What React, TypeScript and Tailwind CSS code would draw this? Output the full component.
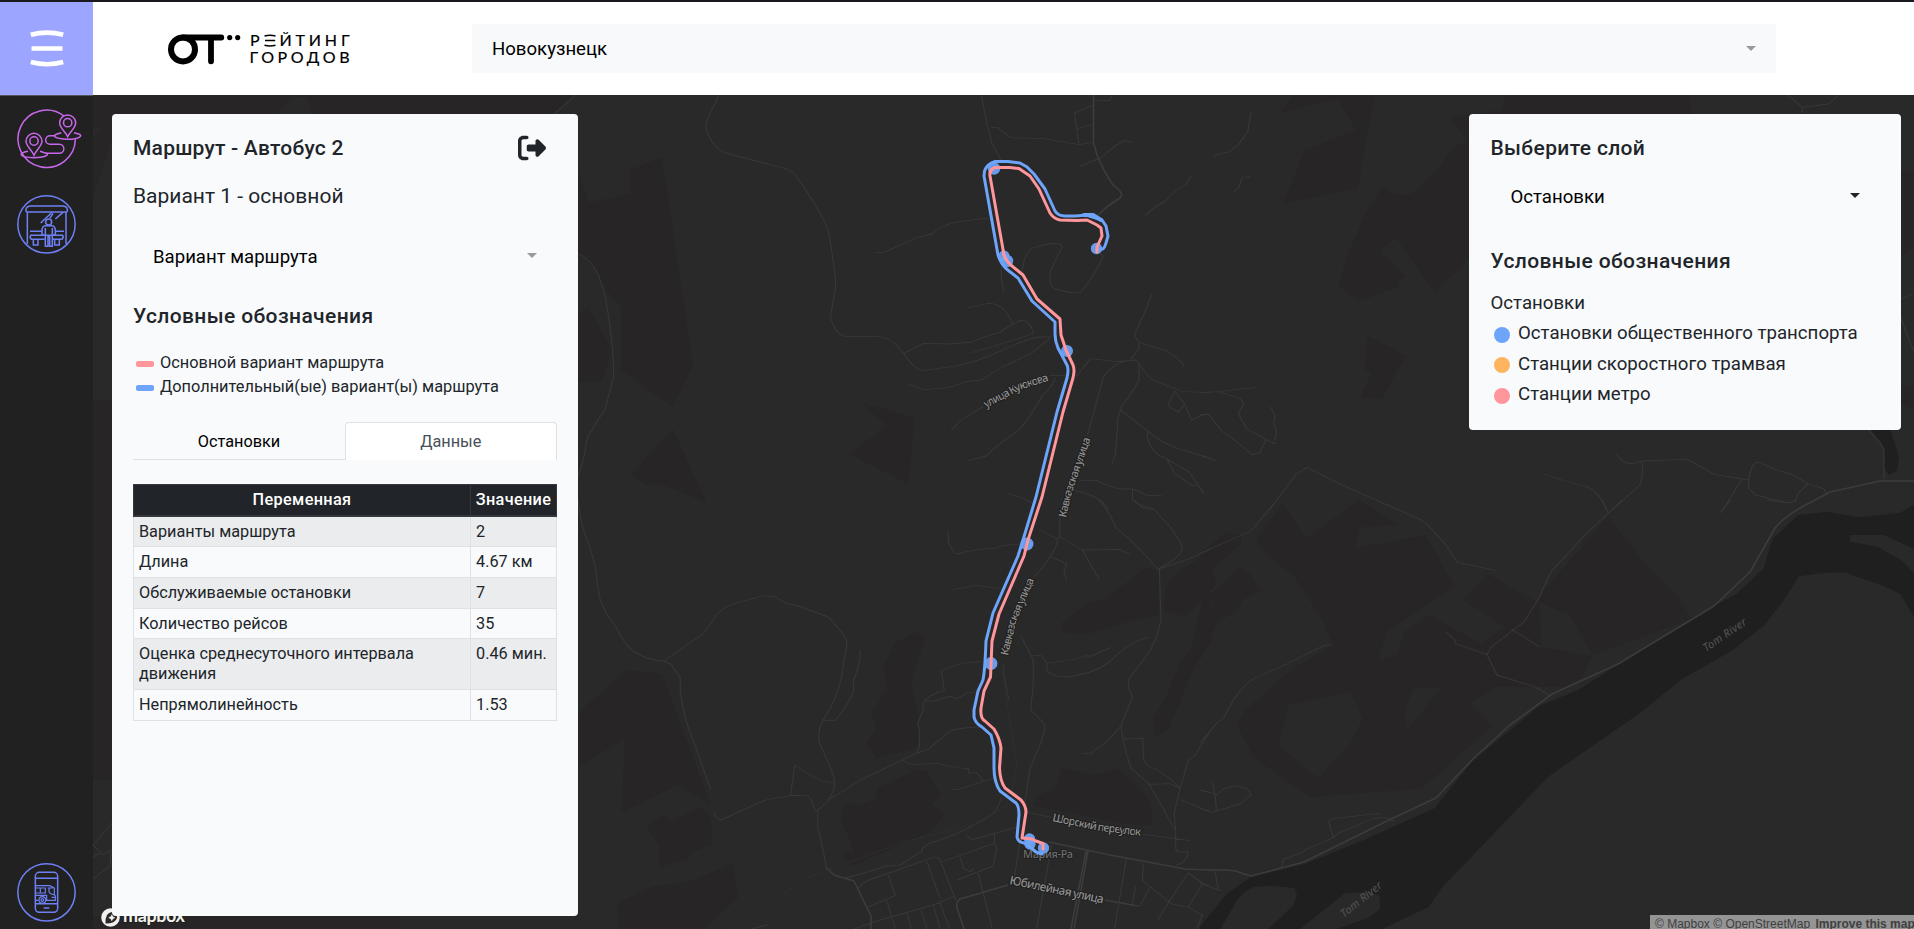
import React from "react";
import { FaRightFromBracket } from "react-icons/fa6";

const BLUE = "#6ea5fa";
const RED = "#ff969c";

const rows: [string, string][] = [
  ["Варианты маршрута", "2"],
  ["Длина", "4.67 км"],
  ["Обслуживаемые остановки", "7"],
  ["Количество рейсов", "35"],
  ["Оценка среднесуточного интервала движения", "0.46 мин."],
  ["Непрямолинейность", "1.53"],
];

function Caret({ className }: { className: string }) {
  return (
    <svg width="10" height="5" viewBox="0 0 10 5" className={className}>
      <path d="M0 0h10L5 5z" fill="currentColor" />
    </svg>
  );
}

function Logo() {
  return (
    <svg width="190" height="40" viewBox="165 30 190 40" fill="none" stroke="#000">
      <circle cx="183" cy="50.4" r="12" strokeWidth="6" />
      <path d="M183 38.5H221.3M211 39V62.3" strokeWidth="5.8" strokeLinecap="round" />
      <g fill="#000" stroke="none">
        <circle cx="229.7" cy="38.6" r="2.6" />
        <circle cx="237.7" cy="38.6" r="2.6" />
        <g fontFamily="Lato, Inter, sans-serif" fontSize="16" fontWeight="400" stroke="#000" strokeWidth=".2">
          <text x="250" y="47">Р</text>
          <text x="279.500" y="47" textLength="70">ЙТИНГ</text>
          <text x="249.500" y="64.300" textLength="100">ГОРОДОВ</text>
        </g>
      </g>
      <path d="M264.500 37q5.500-1.600 11 0M265 41.600h10.200M264.500 46.200q5.500 1.600 11 0" strokeWidth="1.500" />
    </svg>
  );
}

function RouteIcon() {
  return (
    <svg width="93" height="86" viewBox="0 285 279 258" fill="none" stroke="#c767ea" strokeWidth="4.500">
      <path d="M192 348A86 86 0 1 0 226 418" />
      <path d="M102 466C96 450 78 438 78 424a24 24 0 0 1 48 0C126 438 108 450 102 466z" />
      <circle cx="102" cy="423" r="12.500" />
      <path d="M203 410C197 395 179 384 179 369a24 24 0 0 1 48 0C227 384 209 395 203 410z" />
      <circle cx="203" cy="368" r="12.500" />
      <path d="M84 454C50 460 60 472 100 473C135 473 150 464 138 460L120 454" />
      <path d="M184 398C150 406 160 416 203 418C240 418 250 406 236 402L222 398" />
      <path d="M166 407H150a13 13 0 0 0 0 26H178a13 13 0 0 1 0 27H138" />
    </svg>
  );
}

function StopIcon() {
  return (
    <svg width="93" height="86" viewBox="0 543 279 258" fill="none" stroke="#6e80f5" strokeWidth="4.500">
      <circle cx="139.500" cy="673" r="86" />
      <path d="M78 634V628Q80 618 92 618H188Q200 618 202 628V634Q202 636 198 636H82Q78 636 78 634z" />
      <path d="M82 636V732M198 636V732M90 694H126M168 694H192M122 669L154 639M150 654L159 640M166 657L189 637" />
      <circle cx="146" cy="666" r="9" />
      <path d="M136 677H156Q166 678 166 692V706H126V692Q126 678 136 677z" />
      <path d="M136 684V739H144V710H149V739H157V684" />
      <path d="M134 706H92Q88 712 94 718H134M158 706H188Q192 712 186 718H158M100 718V735H114V718M164 718V735H178V718" />
    </svg>
  );
}

function PhoneIcon() {
  return (
    <svg width="93" height="72" viewBox="0 111 279 216" fill="none" stroke="#6e80f5" strokeWidth="4.500">
      <circle cx="139.500" cy="217" r="86" />
      <rect x="106" y="157" width="67" height="120" rx="12" />
      <path d="M106 175H173M106 251H173M131 264H148" />
      <g strokeWidth="3.500">
        <path d="M108 197H150L163 204V224L166 228V241H138M108 204H136V219H108M121 204V219M108 226H140V240M148 204Q142 222 162 224M143 204H160M155 232H164M108 241H116" />
        <circle cx="127" cy="240" r="10" />
        <circle cx="127" cy="240" r="4" />
      </g>
    </svg>
  );
}

function StreetLabel({ id, d, length, size, children, fill = "#8f8f8f", italic = false }: { id: string; d: string; length: number; size: number; children: string; fill?: string; italic?: boolean }) {
  return (
    <>
      <path id={id} d={d} fill="none" stroke="none" />
      <text fontSize={size} fill={fill} fontWeight={italic ? 400 : 500} stroke="#202020" strokeWidth={italic ? 0 : 2} paintOrder="stroke" fontStyle={italic ? "italic" : "normal"}>
        <textPath href={`#${id}`} textLength={length}>{children}</textPath>
      </text>
    </>
  );
}

function MapCanvas() {
  return (
    <svg className="absolute inset-0 h-full w-full" viewBox="93 95 1821 834" fill="none" preserveAspectRatio="none">
      <rect x="93" y="95" width="1821" height="834" fill="#292929" />

      {/* Land cover */}
      <g fill="#272526">
        <path d="M93 95H571L552 114H112V138L93 197z" />
        <path d="M93 400H112V780H93zM93 916H400V929H93z" />
        <g transform="translate(570 90) scale(.40816 .33333)">
          <path d="M20 240L45 338L150 312L147 240L225 202L301 825L252 950L125 840V650L82 590L68 545L20 490zM20 668L45 655L102 778L78 873L20 877zM252 1018L334 1238L222 1180L190 1185L148 1156zM713 936L843 984L829 1180L684 1092L777 1009z" />
        </g>
        <g transform="translate(570 500) scale(.40816 .33333)">
          <path d="M20 640L138 511L225 522L343 910L262 855L127 936L134 716L20 800zM188 978L228 947L250 963L323 920L345 955L349 1034L297 1055L290 1076L220 1100V1038zM115 1212L205 1159L290 1147L397 1091L412 1192L330 1287H120zM795 430L846 397L871 409L835 545L853 650V738L752 774L728 728L751 682L739 635L779 568L769 500zM674 908L712 916L749 896L755 864L850 810L875 816L907 884L887 914L917 944L887 992L690 1098L667 1068L675 1052L701 1066L664 960zM1207 365L1267 311L1310 300L1409 204L1442 215V347L1380 360L1265 403L1208 397zM1206 804L1280 826L1345 807L1376 844L1410 885L1427 940L1425 975H1390L1310 960L1138 917L1142 890L1190 864zM1568 155L1480 225L1460 260L1453 330L1505 348L1550 300L1520 450L1495 490L1465 580L1430 655L1432 710L1465 690L1530 500L1568 430z" />
        </g>
        <g transform="translate(1200 90) scale(.45536 .33333)">
          <path d="M203 15H383L346 295L183 341L230 182L343 120L302 25L177 70zM673 15H1075L1080 75H600V495L515 606L430 442L395 482L451 560L433 572L440 588L350 633L304 588L326 487L372 350L402 290Q430 330 466 310L530 225L551 180L586 150L550 82L660 61zM1539 245H1568V470L1539 500zM1539 885L1568 890V960L1539 940zM368 738L451 797L399 927L354 919L377 847L362 838z" />
        </g>
        <g transform="translate(1200 500) scale(.45536 .33333)">
          <path d="M182 10L233 117L349 0L435 73L351 82L340 145L495 106L558 258L411 394L389 483L434 463L450 394L504 346L617 432L670 380L577 298L631 222L741 308L751 278L897 50L970 180L1055 300L1078 356L862 466L840 530L800 560H643V570L592 607L642 677L487 865L242 891L119 773L82 675L100 630L200 510L293 435L265 350L208 231L137 150L123 118zM0 160L60 95L90 106V130L25 210L36 252L0 300zM0 350L33 317L18 290L88 202L108 220L133 272L92 299L84 330L38 365L0 480z" />
        </g>
      </g>
      <g fill="#292929">
        <path d="M276 114L293 97H307L312 114zM93 126L101 130L93 136z" />
        <g transform="translate(1200 500) scale(.45536 .33333)">
          <path d="M192 616L330 573L357 658L330 730L260 835L171 737L189 650zM470 565L533 560L453 693L448 630zM745 305L812 345L862 468L750 442z" />
        </g>
      </g>

      {/* Rivers */}
      <g transform="translate(1200 500) scale(.45536 .33333)" fill="#1f1f1f">
        <path d="M1568 15L1538 38L1450 52L1375 35L1313 46L1257 118L1238 205L1180 280L1050 380L830 570L745 618L598 784L515 925L360 1020L230 1092L112 1131L60 1180L0 1280V1287H400L503 1220L530 1165L765 830L970 635L1055 540L1170 450L1240 375L1285 295L1315 229L1370 219L1415 217L1500 257L1538 282L1568 350V222L1542 182L1488 140L1427 125V105H1502L1568 147z" />
        <path d="M45 1287L78 1208Q95 1170 120 1160L155 1157L207 1164L213 1184L205 1216L150 1287zM220 1287L318 1180L370 1175L395 1187V1228L370 1253L300 1287z" fill="#292929" />
      </g>
      <path d="M1870 428H1890L1899 457L1897 471L1889 475L1884 468V448z" fill="#1f1f1f" />

      {/* Minor streets */}
      <g stroke="#383838" strokeWidth="1" strokeLinejoin="round">
        <path d="M554 114L571 100L575 95M93 845L112 823M93 845L103 855L111 850L110 866L93 879M100 853L93 857" />
        <g transform="translate(570 90) scale(.40816 .33333)">
          <g strokeWidth="2.600">
            <path d="M365 15L343 70Q330 105 334 115Q348 180 390 192L520 233Q545 240 555 260Q625 380 634 430Q650 540 651 590L638 680Q650 738 680 740H750Q788 740 817 790Q845 840 862 842L940 829Q1000 815 1050 786Q1120 745 1150 741H1180" />
            <path d="M20 490Q50 510 68 550Q82 590 88 630Q107 760 107 860Q88 950 85 960Q60 1005 54 1020Q42 1035 39 1065Q35 1110 20 1160" />
            <path d="M746 487H770L850 443L887 432Q915 400 960 394L1020 384L1028 390M1008 15Q1020 100 1034 160L1057 212M1030 113H1048L1080 143L1160 146L1247 164L1280 157M1236 69L1247 160M1236 69L1280 46M1243 116L1280 104M1282 31H1322L1329 15M1250 228L1300 204Q1330 170 1359 151L1376 158M1410 377Q1430 350 1456 336Q1480 300 1510 282L1523 256M1107 545Q1115 475 1140 472Q1200 450 1206 470L1178 540Q1170 585 1190 597Q1230 612 1250 607Q1280 570 1306 500L1298 488M1057 530V565L1063 605M975 653L1025 640Q1065 640 1085 703M817 790L867 760L935 762L985 756Q1010 740 1055 727Q1080 700 1110 690Q1130 700 1136 730Q1090 750 985 788M830 883L867 899L927 893L970 875L1008 870Q1030 850 1060 831L1130 790L1176 745M1012 950L955 993L934 1022M1176 857H1220M1190 862Q1180 895 1160 912Q1125 985 1100 1020Q1060 1050 1020 1098L975 1112M1240 860L1275 806L1340 815L1385 810M1425 613Q1410 665 1383 735L1394 757V778L1373 808M1394 757L1455 780Q1490 800 1505 830M1268 1035L1307 860Q1330 820 1365 812M1385 810L1394 820V870Q1380 905 1350 950V960Q1340 980 1341 1015L1336 1097L1327 1123M1394 820Q1415 860 1430 872L1503 905L1568 908M1481 902L1465 947L1490 967L1506 943L1481 902M1506 943L1523 990L1555 972L1568 975M1350 960L1410 1018Q1450 1060 1488 1075L1568 1104M1414 1025Q1415 1085 1460 1105Q1500 1135 1515 1143L1552 1208M1462 1107L1481 1150L1525 1187L1535 1185M1250 1171H1290Q1320 1190 1350 1197H1378V1230Q1390 1245 1430 1256M1378 1197L1415 1217L1450 1216M1074 1210L1110 1225L1135 1240M1230 1200Q1300 1215 1320 1260" />
          </g>
        </g>
        <g transform="translate(570 500) scale(.40816 .33333)" strokeWidth="2.600">
          <path d="M20 0Q25 70 42 120Q62 190 64 215Q70 290 76 305Q85 340 110 375Q140 450 165 460Q190 480 230 483L247 492L270 533V575Q278 650 300 715L345 868M230 483L322 405Q345 375 357 346Q385 312 420 305L474 287L503 291L529 310L560 318L633 351Q678 410 678 425V440Q668 500 666 530Q650 610 620 660Q605 700 611 730Q650 825 648 850Q650 870 630 905L607 931V985Q620 1040 628 1104M620 660L650 661Q690 600 695 570V540Q713 485 711 450M648 848L618 844Q585 825 551 795L540 888M630 902L712 840L840 765L880 745Q900 725 935 690Q960 683 1005 681M850 758L856 740V690L852 670L865 630V610Q875 585 917 571L910 513Q950 490 980 487L1010 485M867 603H890L930 589L947 596L975 578L1003 577M607 931H600Q590 890 580 887L545 886L500 895Q475 900 470 905L375 957L366 959L351 940M815 780Q830 795 845 794L900 790Q940 803 977 807V820L997 818L1013 845M933 869H950L1040 833M1058 890Q1045 940 1030 947L1005 965Q940 1010 880 1030L863 1045L862 1055L840 1070L808 1096L775 1098Q720 1120 675 1134M972 1005L985 1020Q1040 1000 1105 978M705 1165Q725 1140 740 1137L890 1072Q900 1070 905 1075L945 1200M873 1080L906 1193M912 1085L1040 1030L1046 1045L1037 1098L948 1140M1040 1030V1000M955 1070L965 1106L980 1115L990 1105M730 1221L797 1187L780 1125M697 1287L760 1260L890 1215L940 1190M775 1200L798 1287M825 1240L837 1287M860 1230L875 1287M890 1215L907 1287M905 1205L930 1287M1000 1120L1035 1287M925 95L928 130Q940 160 950 162Q985 148 1040 145Q1065 130 1110 135M940 269L995 256L1050 265M1150 90L1193 117L1200 111L1255 150L1345 148L1372 163M1200 110V45M1195 118Q1195 140 1160 200L1135 232M1175 170L1217 190L1210 220L1217 242M1255 150L1296 237M1295 0Q1320 30 1338 84Q1370 110 1440 207Q1500 170 1500 145Q1500 130 1470 80L1430 28L1405 25L1380 0M1444 207L1448 360Q1440 410 1420 455L1370 535L1368 560L1378 593L1350 675Q1355 740 1375 805L1417 850Q1435 885 1440 895L1484 995V1045Q1484 1060 1515 1055Q1510 1090 1485 1097M1348 680Q1310 735 1290 745L1278 760H1255M1355 717L1403 715L1406 780L1418 800Q1450 810 1495 864M1417 853L1470 851L1495 864L1515 780L1530 768L1568 695M1495 864L1480 940L1484 990M1493 898L1568 935M1545 870L1568 877M1063 490V520L1075 600M1105 408L1135 480V550L1129 630L1163 672Q1165 690 1150 740L1127 805L1112 930M1135 467H1155L1168 490Q1240 480 1260 468H1278L1325 442M1170 490L1167 505Q1175 530 1215 531Q1290 520 1325 482Q1380 415 1420 413M1120 937L1180 952M1405 1003L1520 1022M1102 1025L1088 1140M1180 1035L1143 1287M1363 1075L1334 1287M1405 1090L1402 1140Q1460 1200 1475 1212L1515 1222L1550 1245L1535 1287M1515 1118L1470 1200L1440 1260M1515 1118L1550 1150L1568 1160M1550 1150L1515 1222M1422 1160L1395 1220M1386 1158L1377 1215M1442 207L1520 175L1568 148M445 1287L488 1273" />
        </g>
        <path d="M735 929L806 878L904 842L975 824L1010 804L1017 764L1005 690L1001 665" strokeDasharray="3 1" stroke="#303030" />
        <g transform="translate(1200 90) scale(.45536 .33333)" strokeWidth="2.500">
          <path d="M112 68L105 125L84 165L64 186L45 190L30 200M110 259L92 263L86 290L75 305M0 908L40 905L88 925L96 940L84 972L103 1017L160 1060H168M40 905L123 892M153 950Q170 975 161 1000Q175 1025 160 1058M0 973H18L50 1026L65 1038L115 1094L130 1090L145 1050M0 1096L35 1112M0 1195L8 1208M152 1260L212 1152L235 1132L300 1177L435 1260M757 1152Q800 1175 850 1190Q880 1210 893 1260M915 1093Q925 1120 950 1121L972 1113L1070 1108L1130 1153L1205 1170Q1210 1120 1225 1116L1270 1142L1303 1155L1335 1181L1370 1197L1377 1215M970 1115Q975 1150 966 1185L905 1260M1190 1168L1148 1260M1205 1170V1195L1220 1215L1290 1238L1307 1235L1313 1212L1335 1181M1290 15L1323 52L1380 42L1403 15M1323 52V70M1539 627L1568 610M1539 680Q1550 730 1568 785M1468 1020L1495 1060L1502 1080V1168" />
        </g>
        <g transform="translate(1200 500) scale(.45536 .33333)" strokeWidth="2.500">
          <path d="M0 160L112 93L169 0M0 730L35 672L52 653L75 597Q100 545 125 531L190 492L273 436L290 433M387 0L480 56L498 72L540 134L565 187L652 212M883 0L897 40L927 0M897 40L850 98L770 217Q750 275 744 295L712 365L640 440L630 463L652 525L735 560L768 586M540 395L560 420V430L630 464M685 388L745 440M1165 0L1143 38M1245 0L1295 9L1310 0M0 870L38 884L50 868L75 857L103 866L112 884L88 912L25 937L0 925M27 845L33 882L36 930M395 940L290 956L282 965L293 1013L303 1000L360 967Q400 940 427 965M293 1013L235 1047L220 1060L185 1077L178 1103M33 1115L40 1168M0 1150L47 1173M0 1245L5 1250" />
        </g>
      </g>

      {/* Main roads */}
      <g stroke="#3c3c3c" strokeWidth="1.600" strokeLinejoin="round">
        <path d="M1093.500 95V143L1097 155Q1110 185 1118 189Q1124 194 1120 198Q1108 205 1097 216" />
        <path d="M825.500 867L834 875L854 881L871 916V929" />
        <path d="M1049 842L1110 855L1185 869L1208 870H1228L1235 871L1251 876L1304 862L1391 819L1436 798L1474 758L1510 725L1552 694L1618 664L1714 606L1750 572L1775 528Q1785 515 1815 500L1830 492L1880 481H1914" />
        <path d="M1008 885L960 899Q956 901 957 908L964 929M1086 851L1071 929M1088 851L1074 929M1105 900L1138 906" />
      </g>

      {/* Street names */}
      <g fontFamily="'Noto Sans', sans-serif">
        <StreetLabel id="kuyukova" d="M986 408L1022 389L1051 380" length={69} size={11}>улица Куюкова</StreetLabel>
        <StreetLabel id="kavkaz-a" d="M1066 518L1072 492L1091 438" length={83} size={11}>Кавказская улица</StreetLabel>
        <StreetLabel id="kavkaz-b" d="M1008 656L1016 622L1035 578" length={81} size={11}>Кавказская улица</StreetLabel>
        <StreetLabel id="shorsky" d="M1052 821L1095 830Q1100 831 1142 836" length={90} size={11}>Шорский переулок</StreetLabel>
        <StreetLabel id="maria" d="M1023 858H1074" length={50} size={11} fill="#6c6c6c">Мария-Ра</StreetLabel>
        <StreetLabel id="yubil" d="M1009 884L1106 904" length={96} size={12}>Юбилейная улица</StreetLabel>
        <StreetLabel id="tom-a" d="M1706 652L1750 622" length={50} size={11} fill="#555555" italic>Tom River</StreetLabel>
        <StreetLabel id="tom-b" d="M1344 918L1385 885" length={50} size={11} fill="#555555" italic>Tom River</StreetLabel>
      </g>

      {/* Bus route */}
      <g strokeLinejoin="round" strokeLinecap="round">
        <g stroke={BLUE} strokeWidth="3">
          <path d="M1100 249H1103Q1105 247 1106 243L1108 236L1106 226L1102 220L1086 215L1076 216H1065Q1058 216 1055 211L1045 189L1034 174L1027 167L1020 163L1008 161.500H995Q987 164 984.500 171L984 176L998 255Q1001 265 1009 271L1018 278L1032 301L1055 322V334Q1055 341 1058 348L1067 365Q1069 369 1067 378L1057 412L1036 497L1023 540L1018 556L993 613L986 641Q985 670 983 680L978 691L974 710V717Q975 723 982 727L991 735L994 748V768Q994 782 1000 791L1016 803Q1019 806 1019 815L1017 837Q1018 842 1024 843L1029 846L1036 852L1042 854" />
          <path d="M1084 215H1093L1101 220" strokeWidth="4" />
        </g>
        <g fill={BLUE} fillOpacity=".92">
          <circle cx="994" cy="168.500" r="6.200" />
          <circle cx="1004" cy="256" r="5.500" />
          <circle cx="1007" cy="261" r="6.200" />
          <circle cx="1096.500" cy="248.500" r="5.700" />
          <circle cx="1067" cy="351" r="6" />
          <circle cx="1027" cy="544" r="6.500" />
          <circle cx="991" cy="663.500" r="6.500" />
          <circle cx="1029.500" cy="839" r="5.700" />
          <circle cx="1030" cy="844" r="5.700" />
          <circle cx="1043.500" cy="848" r="5.700" />
        </g>
        <path stroke={RED} strokeWidth="3" d="M1097 252L1097 247L1102 236L1101 228L1097 225L1087 220L1077 220.500L1060 220Q1054 219 1050 213L1039 189L1030 176L1019 168.500L1010 167.500H995Q989 170 990 176L1004 255Q1006 261 1012 266L1023 275L1037 299L1060 319L1061 335L1066 350L1073 365Q1075 370 1073 378L1063 412L1042 497L1028 540L1024 556L999 614L992 641L990.500 677L984 691L981 708Q980 718 985 721L994 729Q1000 739 1001 748L999.500 768Q1000 781 1005 788L1021 800Q1026 806 1026 812L1022 838L1032 839L1036 841L1043 843.500V849" />
      </g>

      {/* Map provider mark */}
      <circle cx="110.500" cy="917.500" r="9.300" fill="#f1f1ee" />
      <path d="M105.500 923.500Q105 912.500 112 912Q117.500 912.500 117 918Q115.500 923.500 105.500 923.500z" fill="#2b2929" />
      <path d="M111.800 914.200L113 916.500L115.300 917.700L113 918.900L111.800 921.200L110.600 918.900L108.300 917.700L110.600 916.500z" fill="#f1f1ee" />
      <text x="123" y="922" fontFamily="Lato, sans-serif" fontSize="18" fontWeight="700" textLength="62" fill="#f1f1ee" stroke="#1d1b1b" strokeWidth="1.500" paintOrder="stroke">mapbox</text>
    </svg>
  );
}

function RoutePanel() {
  return (
    <aside className="relative flex h-[802px] w-[466px] flex-col rounded bg-[#f8fafc] px-[21px] pt-[18px]">
      <div className="flex h-8 items-center justify-between pr-[11px]">
        <h5 className="text-[21px] leading-8 font-medium tracking-[0.22px]">Маршрут - Автобус 2</h5>
        <FaRightFromBracket size={28} />
      </div>
      <h5 className="mt-4 text-[21px] leading-8">Вариант 1 - основной</h5>
      <div className="mt-7 flex h-8 items-center justify-between pr-5 pl-5 text-black">
        <span className="pt-0.5 text-[18.600px] leading-[30px]">Вариант маршрута</span>
        <Caret className="mb-px text-[#999]" />
      </div>
      <h5 className="mt-7 text-[21px] leading-8 font-medium tracking-[0.38px]">Условные обозначения</h5>
      <ul className="mt-[19px] text-[16.350px] leading-6">
        <li className="flex items-center">
          <span className="mt-0.5 mr-[6.500px] ml-[2.500px] h-1.5 w-[18px] rounded-[2px] bg-[#ff969c]" />
          Основной вариант маршрута
        </li>
        <li className="flex items-center">
          <span className="mt-0.5 mr-[6.500px] ml-[2.500px] h-1.5 w-[18px] rounded-[2px] bg-[#6ea5fa]" />
          Дополнительный(ые) вариант(ы) маршрута
        </li>
      </ul>
      <nav className="mt-[23px] flex h-[38px] w-[423.500px] text-center text-[16.300px] leading-[37px]">
        <span className="w-[212px] border-b border-[#dee2e6] pt-px text-black">Остановки</span>
        <span className="w-[211.500px] rounded-t border border-b-0 border-[#dee2e6] bg-white text-[#495057]">Данные</span>
      </nav>
      <table className="mt-6 w-[423px] table-fixed border-collapse text-[16.250px] leading-5">
        <colgroup>
          <col className="w-[337px]" />
          <col className="w-[86px]" />
        </colgroup>
        <thead>
          <tr className="h-[31px] bg-[#212529] tracking-[0.35px] text-white">
            <th className="border border-b-2 border-[#32383e] px-[5px] py-1 font-medium">Переменная</th>
            <th className="border border-b-2 border-[#32383e] px-1 py-1 font-medium">Значение</th>
          </tr>
        </thead>
        <tbody>
          {rows.map(([name, value]) => (
            <tr key={name} className="odd:bg-[#ebecee]">
              <td className="border border-[#dee2e6] px-[5px] pt-[5px] pb-[4.700px] align-top">{name}</td>
              <td className="border border-[#dee2e6] px-[5px] pt-[5px] pb-[4.700px] align-top whitespace-nowrap">{value}</td>
            </tr>
          ))}
        </tbody>
      </table>
    </aside>
  );
}

function LayerPanel() {
  return (
    <aside className="relative h-[316px] w-[432px] rounded bg-[#f8fafc] pt-[18px] pr-[21px] pl-[21.500px]">
      <h5 className="text-[21px] leading-8 font-medium tracking-[0.36px]">Выберите слой</h5>
      <div className="mt-4 flex h-8 items-center justify-between pr-5 pl-5 text-black">
        <span className="pt-0.5 text-[18.600px] leading-[30px]">Остановки</span>
        <Caret className="mb-px text-[#212529]" />
      </div>
      <h5 className="mt-[33px] text-[21px] leading-8 font-medium tracking-[0.38px]">Условные обозначения</h5>
      <p className="mt-[11px] text-[18.650px] leading-[30px]">Остановки</p>
      <ul className="text-[18.650px] leading-[30.500px]">
        <li className="flex items-center">
          <span className="mt-[3px] mr-2 ml-[3.500px] size-4 rounded-full bg-[#6ea5fa]" />
          Остановки общественного транспорта
        </li>
        <li className="flex items-center">
          <span className="mt-[3px] mr-2 ml-[3.500px] size-4 rounded-full bg-[#ffb45f]" />
          Станции скоростного трамвая
        </li>
        <li className="flex items-center">
          <span className="mt-[3px] mr-2 ml-[3.500px] size-4 rounded-full bg-[#ff969c]" />
          Станции метро
        </li>
      </ul>
    </aside>
  );
}

export default function App() {
  return (
    <div className="flex h-[929px] w-[1914px] flex-col overflow-hidden border-t-2 border-[#19181f] bg-white font-[Roboto,sans-serif] text-[#212529]">
      <header className="flex h-[93px] shrink-0 items-center">
        <button className="flex size-[93px] items-center justify-center bg-[#9ca5ff]" aria-label="Меню">
          <svg width="34" height="38" viewBox="29.500 29 34 38" fill="none" stroke="#fff" strokeWidth="4.600" className="mb-px">
            <path d="M30.300 34.800Q46.500 30.500 62.700 34.800M31 48.500H62M30.300 62Q46.500 66.500 62.700 62" />
          </svg>
        </button>
        <div className="ml-[72px] w-[307px]">
          <Logo />
        </div>
        <div className="flex h-[49px] w-[1304px] items-center justify-between rounded-[3px] bg-[#f8f9fb] pr-5 pl-5 text-black">
          <span className="pt-px text-[18.600px] leading-[30px]">Новокузнецк</span>
          <Caret className="text-[#999]" />
        </div>
      </header>
      <div className="flex h-[834px]">
        <nav className="flex w-[93px] shrink-0 flex-col justify-between bg-[#212121]">
          <div className="border-t border-[#55555c]">
            <div className="-mt-px">
              <RouteIcon />
              <StopIcon />
            </div>
          </div>
          <PhoneIcon />
        </nav>
        <main className="relative flex flex-1 items-start justify-between overflow-hidden pt-[19px] pr-[13px] pl-[19px]">
          <MapCanvas />
          <RoutePanel />
          <LayerPanel />
          <footer className="absolute right-0 bottom-0 h-3.5 w-[264px] overflow-hidden bg-[#949494] pl-[5px] font-['Liberation_Sans',sans-serif] text-[12px] leading-[19px] whitespace-nowrap text-[#404040]">
            © Mapbox © OpenStreetMap <b className="ml-0.5">Improve this map</b>
          </footer>
        </main>
      </div>
    </div>
  );
}
